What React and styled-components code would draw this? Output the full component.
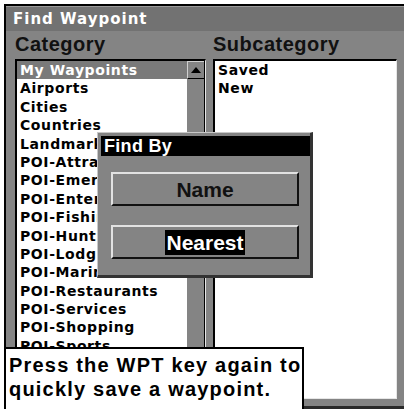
import React from "react"
import styled, { createGlobalStyle } from "styled-components"

const GlobalStyle = createGlobalStyle`
  html, body {
    margin: 0;
    padding: 0;
    background: #fff;
  }
  * {
    box-sizing: border-box;
  }
`

const categories = [
  "My Waypoints",
  "Airports",
  "Cities",
  "Countries",
  "Landmarks",
  "POI-Attractions",
  "POI-Emergency",
  "POI-Entertainment",
  "POI-Fishing",
  "POI-Hunting",
  "POI-Lodging",
  "POI-Marinas",
  "POI-Restaurants",
  "POI-Services",
  "POI-Shopping",
  "POI-Sports",
]

const subcategories = ["Saved", "New"]

const App = () => (
  <Screen>
    <GlobalStyle />
    <Frame>
      <TitleBar>Find Waypoint</TitleBar>
      <Columns>
        <Label>Category</Label>
        <Label>Subcategory</Label>
        <ListBox>
          <Items>
            {categories.map((c, i) => (
              <Item key={c} selected={i === 0}>
                {c}
              </Item>
            ))}
          </Items>
          <ScrollBar>
            <ScrollUp>
              <svg width="10" height="6" viewBox="0 0 10 6">
                <path d="M5 0 L10 6 L0 6 Z" fill="#000" />
              </svg>
            </ScrollUp>
          </ScrollBar>
        </ListBox>
        <ListBox>
          <Items>
            {subcategories.map((s) => (
              <Item key={s}>{s}</Item>
            ))}
          </Items>
        </ListBox>
      </Columns>
    </Frame>

    <Dialog>
      <DialogTitle>Find By</DialogTitle>
      <DialogButtons>
        <Button>
          <ButtonText>Name</ButtonText>
        </Button>
        <Button>
          <ButtonText active>Nearest</ButtonText>
        </Button>
      </DialogButtons>
    </Dialog>

    <Message>
      Press the WPT key again to
      <br />
      quickly save a waypoint.
    </Message>
  </Screen>
)

const Screen = styled.div`
  position: relative;
  width: 404px;
  height: 409px;
  overflow: hidden;
  background: #fff;
`

const Frame = styled.div`
  margin: 4px 0 0 4px;
  width: 400px;
  height: 405px;
  background: #848484;
  border-top: 2px solid #000;
  border-left: 2px solid #000;
  border-bottom: 3px solid #2a2a2a;
  display: flex;
  flex-direction: column;
`

const TitleBar = styled.div`
  height: 25px;
  line-height: 25px;
  padding-left: 7px;
  background: #727272;
  border-top: 1px solid #9a9a9a;
  color: #fff;
  font-family: "DejaVu Sans", sans-serif;
  font-weight: bold;
  font-size: 15px;
  letter-spacing: 1px;
`

const Columns = styled.div`
  flex: 1;
  display: grid;
  grid-template-columns: 191px 184px;
  grid-template-rows: 28px 340px;
  column-gap: 7px;
  padding: 0 0 0 9px;
`

const Label = styled.div`
  font-family: "Liberation Sans", Arial, sans-serif;
  font-weight: bold;
  font-size: 20px;
  line-height: 26px;
  letter-spacing: 0.5px;
  color: #111;
`

const ListBox = styled.div`
  display: flex;
  background: #fff;
  border-top: 2px solid #000;
  border-left: 2px solid #000;
  border-right: 1px solid #e6e6e6;
  border-bottom: 1px solid #e6e6e6;
  overflow: hidden;
`

const Items = styled.div`
  flex: 1;
  min-width: 0;
  overflow: hidden;
`

const Item = styled.div`
  height: 18.4px;
  line-height: 18.4px;
  padding-left: 3px;
  white-space: nowrap;
  overflow: hidden;
  font-family: "DejaVu Sans", sans-serif;
  font-weight: bold;
  font-size: 14px;
  letter-spacing: 0.6px;
  color: ${(p) => (p.selected ? "#fff" : "#000")};
  background: ${(p) => (p.selected ? "#7a7a7a" : "transparent")};
`

const ScrollBar = styled.div`
  width: 18px;
  background: #848484;
  border-right: 1px solid #000;
`

const ScrollUp = styled.div`
  height: 18px;
  display: flex;
  align-items: center;
  justify-content: center;
  border-top: 1px solid #d0d0d0;
  border-left: 1px solid #d0d0d0;
  border-bottom: 1px solid #000;
`

const Dialog = styled.div`
  position: absolute;
  left: 97px;
  top: 132px;
  width: 216px;
  height: 146px;
  background: #848484;
  border-top: 1px solid #c8c8c8;
  border-left: 1px solid #c8c8c8;
  border-right: 3px solid #333;
  border-bottom: 3px solid #333;
  padding: 3px 0 0 3px;
  display: flex;
  flex-direction: column;
`

const DialogTitle = styled.div`
  height: 20px;
  line-height: 20px;
  background: #000;
  color: #fff;
  padding-left: 3px;
  font-family: "Liberation Sans", Arial, sans-serif;
  font-weight: bold;
  font-size: 18px;
  letter-spacing: 0.3px;
`

const DialogButtons = styled.div`
  display: flex;
  flex-direction: column;
  gap: 19px;
  padding: 16px 0 0 10px;
`

const Button = styled.div`
  width: 188px;
  height: 34px;
  display: flex;
  align-items: center;
  justify-content: center;
  border-top: 2px solid #e2e2e2;
  border-left: 2px solid #e2e2e2;
  border-right: 2px solid #111;
  border-bottom: 2px solid #111;
`

const ButtonText = styled.span`
  font-family: "Liberation Sans", Arial, sans-serif;
  font-weight: bold;
  font-size: 21px;
  line-height: 25px;
  padding: 0 1px;
  color: ${(p) => (p.active ? "#fff" : "#111")};
  background: ${(p) => (p.active ? "#000" : "transparent")};
`

const Message = styled.div`
  position: absolute;
  left: 4px;
  top: 347px;
  width: 300px;
  height: 64px;
  background: #fff;
  border: 2px solid #000;
  padding: 4px 0 0 3px;
  font-family: "Liberation Sans", Arial, sans-serif;
  font-weight: bold;
  font-size: 20px;
  line-height: 24px;
  letter-spacing: 1.2px;
  color: #000;
  white-space: nowrap;
`

export default App
